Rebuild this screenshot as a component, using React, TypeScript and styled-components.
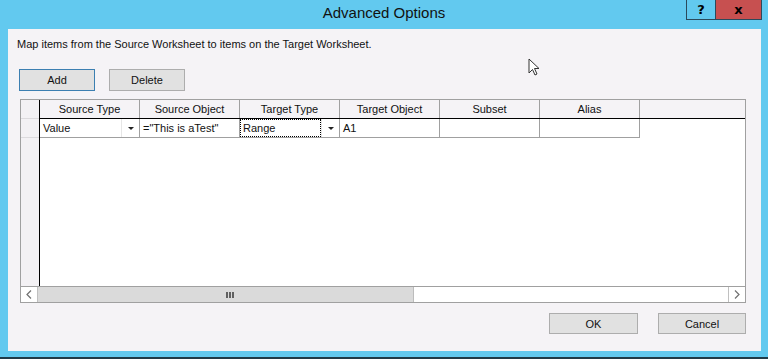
import styled, { createGlobalStyle } from "styled-components";

const GlobalStyle = createGlobalStyle`
  html, body {
    margin: 0;
    padding: 0;
    background: #62c9ef;
  }
  body {
    font-family: "Liberation Sans", Arial, sans-serif;
    color: #000;
  }
`;

const Window = styled.div`
  position: relative;
  width: 768px;
  height: 359px;
  box-sizing: border-box;
  background: #62c9ef;
  border-bottom: 2px solid #1f3a48;
  display: flex;
  flex-direction: column;
`;

const TitleBar = styled.div`
  height: 29px;
  display: grid;
  grid-template-columns: 1fr auto 1fr;
  align-items: start;
`;

const Title = styled.div`
  grid-column: 2;
  font-size: 15px;
  line-height: 25px;
  color: #111;
`;

const Caption = styled.div`
  grid-column: 3;
  justify-self: end;
  display: flex;
  margin-right: 6px;
`;

const CaptionButton = styled.div<{ $close?: boolean }>`
  width: ${(p) => (p.$close ? 45 : 28)}px;
  height: 19px;
  border: 1px solid #2a4a5c;
  border-top: none;
  border-left: ${(p) => (p.$close ? "none" : "1px solid #2a4a5c")};
  background: ${(p) => (p.$close ? "#c75050" : "#62c9ef")};
  display: flex;
  align-items: center;
  justify-content: center;
  font-family: "DejaVu Sans", sans-serif;
  font-weight: bold;
  font-size: 13px;
  color: #000;
`;

const Client = styled.div`
  flex: 1;
  margin: 0 7px 6px 8px;
  background: #f5f3f6;
  display: flex;
  flex-direction: column;
  padding: 0 15px 0 9px;
  font-size: 11px;
`;

const Intro = styled.div`
  margin-top: 9px;
  line-height: 13px;
  color: #111;
`;

const Toolbar = styled.div`
  display: flex;
  gap: 14px;
  margin: 18px 0 0 2px;
`;

const PushButton = styled.div<{ $w: number; $default?: boolean; $h?: number }>`
  width: ${(p) => p.$w}px;
  height: ${(p) => p.$h ?? 22}px;
  box-sizing: border-box;
  border: 1px solid ${(p) => (p.$default ? "#3c7fb1" : "#adadad")};
  background: #e1e1e1;
  display: flex;
  align-items: center;
  justify-content: center;
  font-size: 11px;
  color: #111;
`;

const GridBox = styled.div`
  margin: 8px 0 0 3px;
  width: 726px;
  height: 204px;
  box-sizing: border-box;
  border: 1px solid #a0a0a0;
  background: #fff;
  display: flex;
  flex-direction: column;
`;

const GridBody = styled.div`
  flex: 1;
  display: flex;
  min-height: 0;
`;

const RowHeaders = styled.div`
  width: 18px;
  border-right: 1px solid #000;
  background: #f3f1f4;
  display: flex;
  flex-direction: column;
`;

const RowHead = styled.div`
  height: 18px;
  border-bottom: 1px solid #dcdadd;
`;

const Columns = styled.div`
  flex: 1;
  display: flex;
  flex-direction: column;
`;

const HeaderRow = styled.div`
  display: flex;
  height: 18px;
  border-bottom: 1px solid #000;
  background: #f5f3f6;
`;

const HeaderCell = styled.div`
  width: 99px;
  border-right: 1px solid #a0a0a0;
  text-align: center;
  line-height: 18px;
  font-size: 11px;
  color: #111;
`;

const DataRow = styled.div`
  display: flex;
  height: 19px;
`;

const Cell = styled.div`
  position: relative;
  width: 99px;
  height: 18px;
  border-right: 1px solid #a0a0a0;
  border-bottom: 1px solid #a0a0a0;
  display: flex;
  align-items: stretch;
  font-size: 11px;
  color: #111;
`;

const CellText = styled.div<{ $focus?: boolean }>`
  flex: 1;
  padding-left: ${(p) => (p.$focus ? 2 : 3)}px;
  line-height: ${(p) => (p.$focus ? 16 : 18)}px;
  white-space: nowrap;
  overflow: hidden;
  ${(p) => (p.$focus ? "border: 1px dotted #000;" : "")}
`;

const DropButton = styled.div`
  width: 17px;
  display: flex;
  align-items: center;
  justify-content: center;
  border-left: 1px solid #e6e6e6;
  &::after {
    content: "";
    border-left: 3px solid transparent;
    border-right: 3px solid transparent;
    border-top: 3px solid #222;
    margin-top: 1px;
  }
`;

const HScroll = styled.div`
  height: 16px;
  box-sizing: border-box;
  border-top: 1px solid #a0a0a0;
  display: flex;
`;

const ScrollArrow = styled.div<{ $side: "left" | "right" }>`
  width: 16px;
  background: #fff;
  ${(p) => (p.$side === "left" ? "border-right" : "border-left")}: 1px solid #c0c0c0;
  display: flex;
  align-items: center;
  justify-content: center;
`;

const Thumb = styled.div`
  width: 375px;
  background: #dadada;
  border-right: 1px solid #bcbcbc;
  display: flex;
  align-items: center;
  justify-content: center;
`;

const Grip = styled.div`
  display: flex;
  gap: 1px;
  margin-left: 8px;
  span {
    width: 2px;
    height: 6px;
    background: #606060;
  }
`;

const Track = styled.div`
  flex: 1;
  background: #fff;
`;

const Footer = styled.div`
  display: flex;
  justify-content: flex-end;
  gap: 20px;
  margin-top: 10px;
`;

const Pointer = styled.svg`
  position: absolute;
  left: 528px;
  top: 58px;
`;

const headers = ["Source Type", "Source Object", "Target Type", "Target Object", "Subset", "Alias"];

const Chevron = ({ dir }: { dir: "left" | "right" }) => (
  <svg width="6" height="9" viewBox="0 0 6 9">
    <path
      d={dir === "left" ? "M5 0.5 L1 4.5 L5 8.5" : "M1 0.5 L5 4.5 L1 8.5"}
      fill="none"
      stroke="#707070"
      strokeWidth="1.2"
    />
  </svg>
);

export default function App() {
  return (
    <>
      <GlobalStyle />
      <Window>
        <TitleBar>
          <Title>Advanced Options</Title>
          <Caption>
            <CaptionButton>?</CaptionButton>
            <CaptionButton $close>x</CaptionButton>
          </Caption>
        </TitleBar>
        <Client>
          <Intro>Map items from the Source Worksheet to items on the Target Worksheet.</Intro>
          <Toolbar>
            <PushButton $w={76} $default>
              Add
            </PushButton>
            <PushButton $w={76}>Delete</PushButton>
          </Toolbar>
          <GridBox>
            <GridBody>
              <RowHeaders>
                <RowHead />
                <RowHead />
              </RowHeaders>
              <Columns>
                <HeaderRow>
                  {headers.map((h) => (
                    <HeaderCell key={h}>{h}</HeaderCell>
                  ))}
                </HeaderRow>
                <DataRow>
                  <Cell>
                    <CellText>Value</CellText>
                    <DropButton />
                  </Cell>
                  <Cell>
                    <CellText>="This is aTest"</CellText>
                  </Cell>
                  <Cell>
                    <CellText $focus>Range</CellText>
                    <DropButton />
                  </Cell>
                  <Cell>
                    <CellText>A1</CellText>
                  </Cell>
                  <Cell>
                    <CellText />
                  </Cell>
                  <Cell>
                    <CellText />
                  </Cell>
                </DataRow>
              </Columns>
            </GridBody>
            <HScroll>
              <ScrollArrow $side="left">
                <Chevron dir="left" />
              </ScrollArrow>
              <Thumb>
                <Grip>
                  <span />
                  <span />
                  <span />
                </Grip>
              </Thumb>
              <Track />
              <ScrollArrow $side="right">
                <Chevron dir="right" />
              </ScrollArrow>
            </HScroll>
          </GridBox>
          <Footer>
            <PushButton $w={89} $h={21}>
              OK
            </PushButton>
            <PushButton $w={88} $h={21}>
              Cancel
            </PushButton>
          </Footer>
        </Client>
        <Pointer width="14" height="20" viewBox="0 0 14 20">
          <path
            d="M1 1 L1 15 L4.5 11.5 L7 17 L9 16 L6.5 10.5 L11 10.5 Z"
            fill="#fff"
            stroke="#333"
            strokeWidth="1"
          />
        </Pointer>
      </Window>
    </>
  );
}
